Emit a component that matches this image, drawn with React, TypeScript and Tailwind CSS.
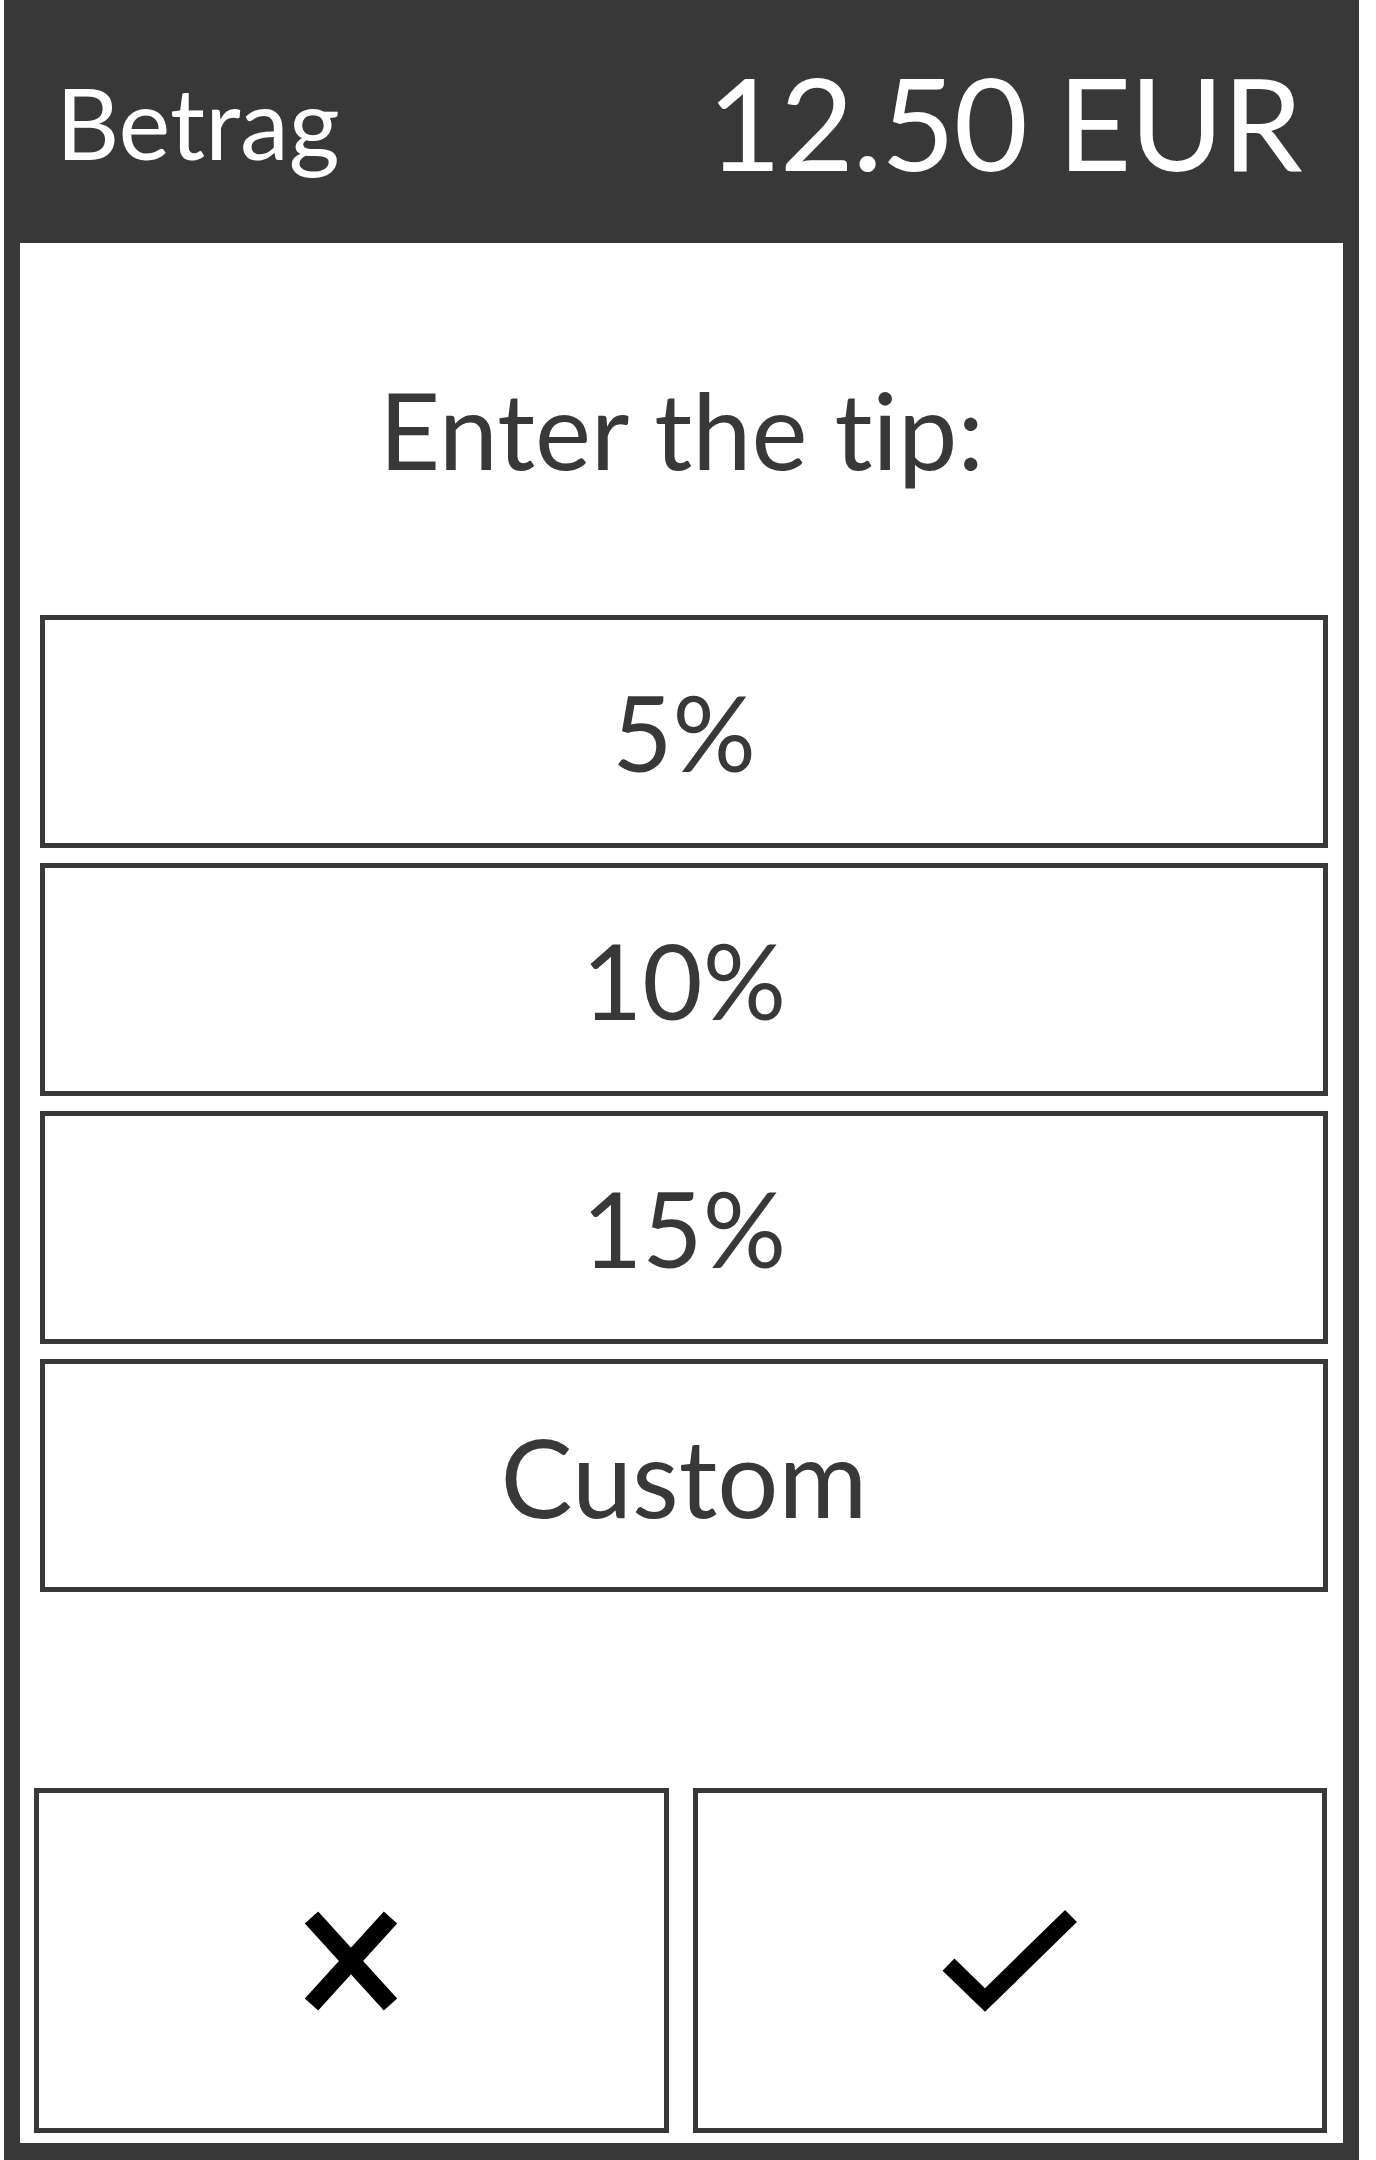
import React from "react";

const tips = [
  { label: "5%", size: "text-[104px]" },
  { label: "10%", size: "text-[104px]" },
  { label: "15%", size: "text-[104px]" },
  { label: "Custom", size: "text-[108px]" },
];

const CloseIcon = () => (
  <svg width="100" height="100" viewBox="0 0 100 100" fill="none">
    <line x1="10.5" y1="6.5" x2="89.5" y2="93.5" stroke="#000" strokeWidth="18" />
    <line x1="89.5" y1="6.5" x2="10.5" y2="93.5" stroke="#000" strokeWidth="18" />
  </svg>
);

const CheckIcon = () => (
  <svg width="140" height="108" viewBox="0 0 140 108" fill="none">
    <polyline
      points="8.5,57.7 45,93 131,9"
      stroke="#000"
      strokeWidth="17"
      strokeLinejoin="miter"
    />
  </svg>
);

export default function App() {
  return (
    <div className="w-[1376px] h-[2160px] bg-white font-['Lato',sans-serif] [font-variant-ligatures:none]">
      <div className="ml-[4px] w-[1355px] h-[2160px] bg-[#383838] flex flex-col pb-[17px]">
        {/* header */}
        <div className="h-[243px] shrink-0 flex items-center justify-between pl-[52px] pr-[58px] text-white">
          <span className="text-[98px] leading-none">Betrag</span>
          <span className="text-[128px] leading-none tracking-[-1.6px]">12.50 EUR</span>
        </div>

        {/* body */}
        <div className="flex-1 mx-[16px] bg-white flex flex-col text-[#383838]">
          <div className="h-[372px] flex items-center justify-center">
            <h1 className="text-[106px] leading-none">Enter the tip:</h1>
          </div>

          <div className="ml-[20px] mr-[15px] flex flex-col gap-[15px]">
            {tips.map((t) => (
              <button
                key={t.label}
                className={
                  "h-[233px] border-[5px] border-[#383838] bg-white flex items-center justify-center leading-none text-[#383838] " +
                  t.size
                }
              >
                {t.label}
              </button>
            ))}
          </div>

          <div className="flex-1" />

          <div className="ml-[14px] mr-[16px] mb-[10px] h-[345px] flex gap-[24px]">
            <button className="flex-1 border-[5px] border-[#383838] bg-white flex items-center justify-center">
              <CloseIcon />
            </button>
            <button className="flex-1 border-[5px] border-[#383838] bg-white flex items-center justify-center">
              <CheckIcon />
            </button>
          </div>
        </div>
      </div>
    </div>
  );
}
